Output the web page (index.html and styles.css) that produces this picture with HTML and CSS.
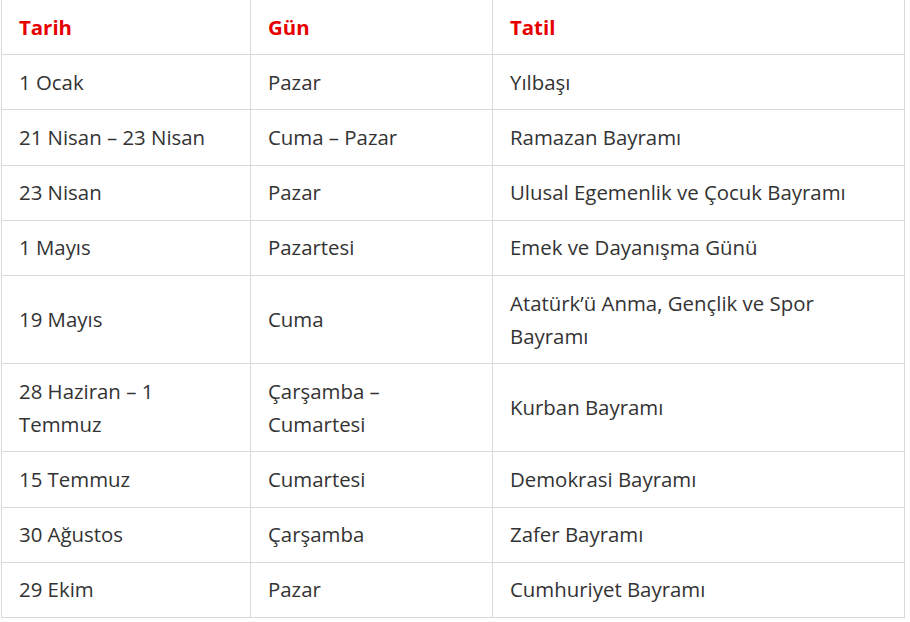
FILE: index.html
```html
<!DOCTYPE html>
<html lang="tr">
<head>
<meta charset="utf-8">
<link rel="stylesheet" href="styles.css">
</head>
<body>
<table class="holidays">
  <colgroup>
    <col class="c1"><col class="c2"><col class="c3">
  </colgroup>
  <thead>
    <tr><th>Tarih</th><th>Gün</th><th>Tatil</th></tr>
  </thead>
  <tbody>
    <tr><td>1 Ocak</td><td>Pazar</td><td>Yılbaşı</td></tr>
    <tr><td>21 Nisan – 23 Nisan</td><td>Cuma – Pazar</td><td>Ramazan Bayramı</td></tr>
    <tr><td>23 Nisan</td><td>Pazar</td><td>Ulusal Egemenlik ve Çocuk Bayramı</td></tr>
    <tr><td>1 Mayıs</td><td>Pazartesi</td><td>Emek ve Dayanışma Günü</td></tr>
    <tr><td>19 Mayıs</td><td>Cuma</td><td>Atatürk’ü Anma, Gençlik ve Spor Bayramı</td></tr>
    <tr><td>28 Haziran – 1 Temmuz</td><td>Çarşamba – Cumartesi</td><td>Kurban Bayramı</td></tr>
    <tr><td>15 Temmuz</td><td>Cumartesi</td><td>Demokrasi Bayramı</td></tr>
    <tr><td>30 Ağustos</td><td>Çarşamba</td><td>Zafer Bayramı</td></tr>
    <tr><td>29 Ekim</td><td>Pazar</td><td>Cumhuriyet Bayramı</td></tr>
  </tbody>
</table>
</body>
</html>
```
FILE: styles.css
```css
html, body {
  margin: 0;
  padding: 0;
  background: #fff;
}
body {
  padding-left: 1px;
  font-family: "Open Sans", "Noto Sans", sans-serif;
  font-size: 20.4px;
  color: #333;
}
.holidays {
  border-collapse: collapse;
  table-layout: fixed;
  width: 903px;
  margin-top: -1px;
}
.c1 { width: 249px; }
.c2 { width: 242px; }
.c3 { width: 412px; }
.holidays th,
.holidays td {
  border: 1px solid #d9d9d9;
  padding: 10.6px 17px;
  line-height: 33px;
  text-align: left;
  vertical-align: middle;
}
.holidays th {
  color: #e60000;
  font-weight: 700;
}
```
